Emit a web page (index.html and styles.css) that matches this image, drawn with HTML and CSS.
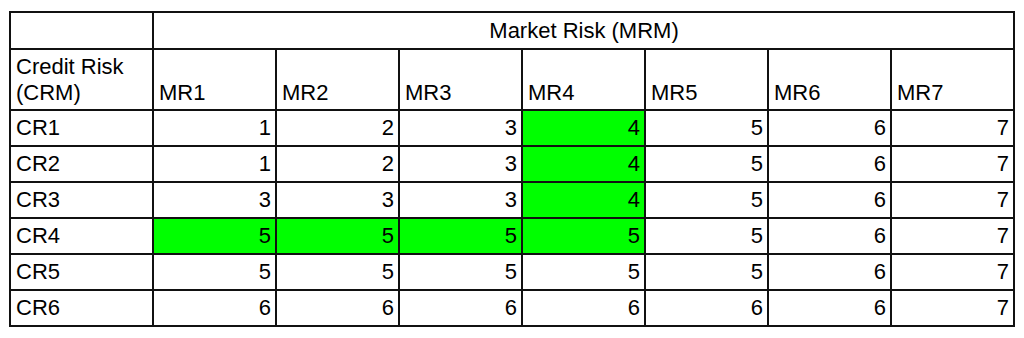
FILE: index.html
```html
<!DOCTYPE html>
<html lang="en">
<head>
    <meta charset="UTF-8">
    <title>Risk Matrix</title>
    <link rel="stylesheet" href="styles.css">
</head>
<body>

<table class="matrix">
    <colgroup>
        <col class="label-col">
        <col><col><col><col><col><col><col>
    </colgroup>
    <tr class="top-head">
        <th></th>
        <th colspan="7" class="group">Market Risk (MRM)</th>
    </tr>
    <tr class="sub-head">
        <th>Credit Risk<br>(CRM)</th>
        <th>MR1</th><th>MR2</th><th>MR3</th><th>MR4</th><th>MR5</th><th>MR6</th><th>MR7</th>
    </tr>
    <tr>
        <td class="row-label">CR1</td>
        <td>1</td><td>2</td><td>3</td><td class="hit">4</td><td>5</td><td>6</td><td>7</td>
    </tr>
    <tr>
        <td class="row-label">CR2</td>
        <td>1</td><td>2</td><td>3</td><td class="hit">4</td><td>5</td><td>6</td><td>7</td>
    </tr>
    <tr>
        <td class="row-label">CR3</td>
        <td>3</td><td>3</td><td>3</td><td class="hit">4</td><td>5</td><td>6</td><td>7</td>
    </tr>
    <tr>
        <td class="row-label">CR4</td>
        <td class="hit">5</td><td class="hit">5</td><td class="hit">5</td><td class="hit">5</td><td>5</td><td>6</td><td>7</td>
    </tr>
    <tr>
        <td class="row-label">CR5</td>
        <td>5</td><td>5</td><td>5</td><td>5</td><td>5</td><td>6</td><td>7</td>
    </tr>
    <tr>
        <td class="row-label">CR6</td>
        <td>6</td><td>6</td><td>6</td><td>6</td><td>6</td><td>6</td><td>7</td>
    </tr>
</table>

</body>
</html>
```

FILE: styles.css
```css
body {
    margin: 0;
    padding: 11px 0 0 9px;
    background-color: #ffffff;
    font-family: 'Liberation Sans', Arial, sans-serif;
    color: #000000;
}
.matrix {
    border-collapse: collapse;
    table-layout: fixed;
    width: 1005px;
    font-size: 22px;
}
.matrix col {
    width: 123px;
}
.matrix col.label-col {
    width: 143px;
}
.matrix tr {
    height: 36px;
}
.matrix th, .matrix td {
    border: 2px solid #111111;
    padding: 0 4px 0 5px;
    line-height: 26px;
    font-weight: normal;
}
.matrix tr.top-head {
    height: 37px;
}
.top-head .group {
    text-align: center;
}
.matrix tr.sub-head {
    height: 61px;
}
.sub-head th {
    text-align: left;
    vertical-align: bottom;
    padding-bottom: 3px;
}
.matrix td {
    text-align: right;
}
.matrix td.row-label {
    text-align: left;
}
.matrix td.hit {
    background-color: #00ff00;
}
```
